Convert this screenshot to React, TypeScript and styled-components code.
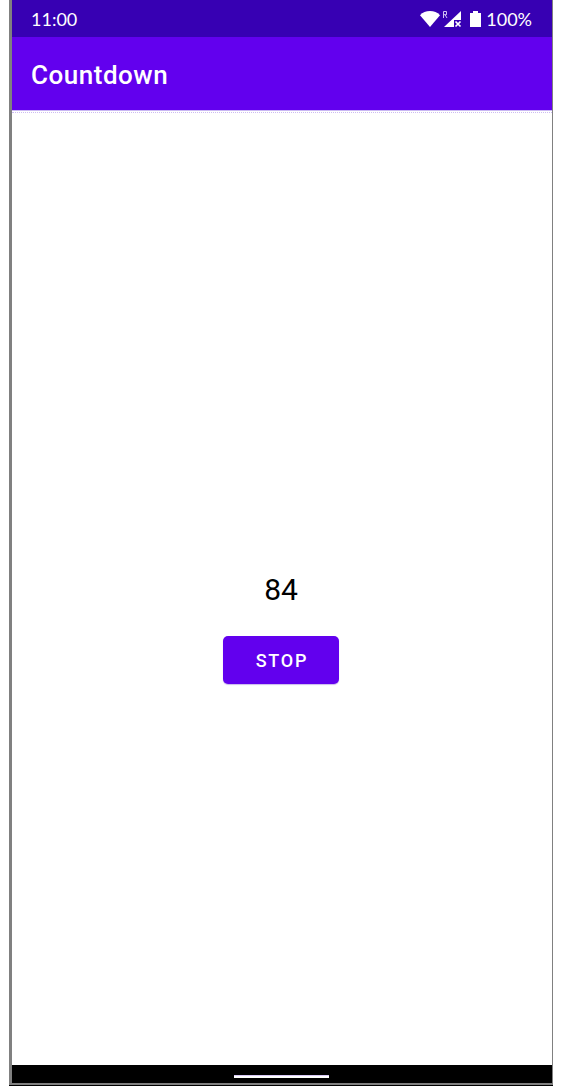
import React, { useState } from "react";
import styled, { createGlobalStyle } from "styled-components";

const GlobalStyle = createGlobalStyle`
  * { box-sizing: border-box; }
  body {
    margin: 0;
    background: #fff;
    font-family: Roboto, "Liberation Sans", sans-serif;
  }
`;

const Device = styled.div`
  display: flex;
  flex-direction: column;
  min-height: 100vh;
  margin: 0 9px;
  border-bottom: 1px solid #000;
`;

const Screen = styled.div`
  flex: 1;
  display: flex;
  flex-direction: column;
  border: solid #808080;
  border-width: 0 1px 2px 3px;
`;

const StatusBar = styled.header`
  display: flex;
  align-items: center;
  justify-content: space-between;
  height: 37px;
  padding: 0 20px 0 19px;
  background: #3700b3;
  color: #fff;
  font-family: Lato, Roboto, sans-serif;
  font-size: 18px;
  line-height: 20px;
`;

const StatusGroup = styled.div`
  display: flex;
  align-items: center;
  gap: 4px;
`;

const AppBar = styled.div`
  display: flex;
  align-items: center;
  height: 73px;
  padding: 2px 19px 0;
  background: #6200ee;
  color: #fff;
`;

const Title = styled.h1`
  margin: 0;
  font-size: 26px;
  line-height: 32px;
  font-weight: 500;
  letter-spacing: 0.02em;
`;

const Edge = styled.div`
  height: 3px;
  border-top: 1px solid #c9b6f3;
  border-bottom: 1px dotted #cdbcf3;
`;

const Content = styled.main`
  flex: 1;
  display: grid;
  grid-template-rows: 1fr auto 1fr;
  justify-items: center;
  row-gap: 28px;
  padding: 2px 2px 0 0;
`;

const Count = styled.output`
  grid-row: 2;
  color: #000;
  font-size: 30px;
  line-height: 36px;
`;

const StopButton = styled.button`
  grid-row: 3;
  align-self: start;
  height: 48px;
  padding: 2px 31px 0 33px;
  border: 0;
  border-radius: 5px;
  background: #6200ee;
  box-shadow: 0 1px 1px #c9b8ee;
  color: #fff;
  font: 500 18px/24px Roboto, sans-serif;
  letter-spacing: 0.1em;
  cursor: pointer;
`;

const NavBar = styled.footer`
  display: flex;
  justify-content: center;
  align-items: flex-end;
  height: 18px;
  padding: 0 2px 5px 0;
  background: #000;
`;

const HomeHandle = styled.span`
  width: 95px;
  height: 3px;
  background: #fff;
  border-top: 1px solid #d8c8f8;
`;

const StatusIcons = () => (
  <svg width="62" height="20" viewBox="0 0 62 20" fill="#fff" aria-hidden="true">
    <path d="M0 6.200C2.600 3.400 6 2 10 2s7.400 1.400 10 4.200L10 18z" />
    <path
      d="M23.500 9V2.500h3v3.200h-3M25 5.700L27 9"
      fill="none"
      stroke="#d2c3f4"
      strokeWidth="1"
    />
    <path d="M41 2v9h-7v7H24z" />
    <path d="M35.500 12.500l5 5M40.500 12.500l-5 5" stroke="#fff" strokeWidth="1.700" />
    <path d="M50 4h3V2h5v2h3v14H50z" />
  </svg>
);

export default function App() {
  const [running, setRunning] = useState(true);
  return (
    <>
      <GlobalStyle />
      <Device>
        <Screen>
          <StatusBar>
            <time>11:00</time>
            <StatusGroup>
              <StatusIcons />
              <span>100%</span>
            </StatusGroup>
          </StatusBar>
          <AppBar>
            <Title>Countdown</Title>
          </AppBar>
          <Edge />
          <Content>
            <Count>84</Count>
            <StopButton type="button" onClick={() => setRunning(!running)}>
              {running ? "STOP" : "START"}
            </StopButton>
          </Content>
          <NavBar>
            <HomeHandle />
          </NavBar>
        </Screen>
      </Device>
    </>
  );
}
